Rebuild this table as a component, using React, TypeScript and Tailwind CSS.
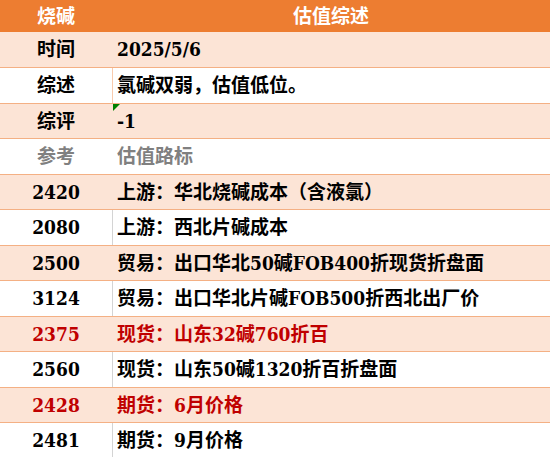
type Tone = "black" | "red" | "grey";

interface Row {
    label: string;
    text: string;
    shaded: boolean;
    tone: Tone;
    divider: "none" | "peach" | "grey";
    tall: boolean;
    flag?: boolean;
}

const rows: Row[] = [
    {label: "时间", text: "2025/5/6", shaded: true, tone: "black", divider: "none", tall: false},
    {label: "综述", text: "氯碱双弱，估值低位。", shaded: false, tone: "black", divider: "peach", tall: true},
    {label: "综评", text: "-1", shaded: true, tone: "black", divider: "none", tall: false, flag: true},
    {label: "参考", text: "估值路标", shaded: false, tone: "grey", divider: "none", tall: true},
    {label: "2420", text: "上游：华北烧碱成本（含液氯）", shaded: true, tone: "black", divider: "none", tall: false},
    {label: "2080", text: "上游：西北片碱成本", shaded: false, tone: "black", divider: "grey", tall: true},
    {label: "2500", text: "贸易：出口华北50碱FOB400折现货折盘面", shaded: true, tone: "black", divider: "none", tall: false},
    {label: "3124", text: "贸易：出口华北片碱FOB500折西北出厂价", shaded: false, tone: "black", divider: "grey", tall: true},
    {label: "2375", text: "现货：山东32碱760折百", shaded: true, tone: "red", divider: "none", tall: false},
    {label: "2560", text: "现货：山东50碱1320折百折盘面", shaded: false, tone: "black", divider: "grey", tall: true},
    {label: "2428", text: "期货：6月价格", shaded: true, tone: "red", divider: "none", tall: false},
    {label: "2481", text: "期货：9月价格", shaded: false, tone: "black", divider: "grey", tall: false},
];

const toneClass: Record<Tone, string> = {
    black: "text-black",
    red: "text-[#c00000]",
    grey: "text-[#808080]",
};

const dividerClass = {
    none: "border-l border-transparent",
    peach: "border-l border-[#f8cbad]",
    grey: "border-l border-[#d4d4d4]",
};

export default function App() {
    return (
        <div
            className="w-[550px] h-[457px] overflow-hidden bg-white font-bold text-[19px] leading-none"
            style={{fontFamily: '"DejaVu Serif Condensed", "DejaVu Serif", "Noto Sans CJK SC", serif'}}
        >
            {/* header */}
            <div className="grid grid-cols-[112px_1fr] h-[32px] bg-[#ed7d31] text-white">
                <div className="flex items-center justify-center">烧碱</div>
                <div className="flex items-center justify-center">估值综述</div>
            </div>

            {rows.map((row, i) => (
                <div
                    key={row.label}
                    className={`grid grid-cols-[112px_1fr] ${row.tall ? "h-[36px]" : "h-[35px]"} ${
                        i === 0 ? "" : "border-t border-[#f4b084]"
                    } ${row.shaded ? "bg-[#fce4d6]" : "bg-white"} ${toneClass[row.tone]}`}
                >
                    <div className="flex items-center justify-center">{row.label}</div>
                    <div className={`relative flex items-center pl-[4px] ${dividerClass[row.divider]}`}>
                        {row.flag && (
                            <span className="absolute left-0 top-0 w-0 h-0 border-t-[7px] border-r-[7px] border-t-[#008000] border-r-transparent"/>
                        )}
                        {row.text}
                    </div>
                </div>
            ))}
        </div>
    );
}
